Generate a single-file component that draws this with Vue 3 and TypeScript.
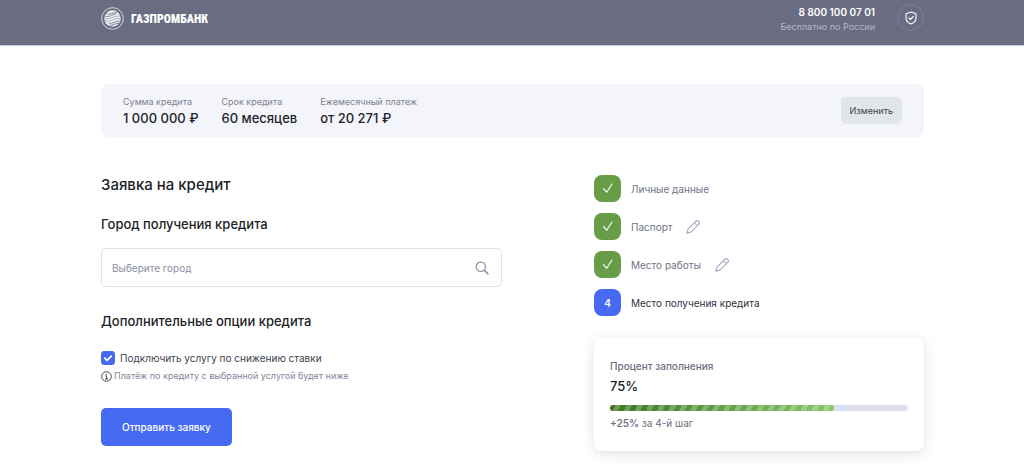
<script setup lang="ts">
import { ref } from 'vue'

interface SummaryItem {
  label: string
  value: string
}

interface Step {
  title: string
  done: boolean
  editable: boolean
}

const summary: SummaryItem[] = [
  { label: 'Сумма кредита', value: '1 000 000 ₽' },
  { label: 'Срок кредита', value: '60 месяцев' },
  { label: 'Ежемесячный платеж', value: 'от 20 271 ₽' },
]

const steps: Step[] = [
  { title: 'Личные данные', done: true, editable: false },
  { title: 'Паспорт', done: true, editable: true },
  { title: 'Место работы', done: true, editable: true },
  { title: 'Место получения кредита', done: false, editable: false },
]

const city = ref('')
const reduceRate = ref(true)
const progress = ref(75)
</script>

<template>
  <div class="page">
    <header class="header">
      <a class="brand" href="#">
        <svg class="brand-mark" viewBox="0 0 24 24" fill="none" aria-hidden="true">
          <circle cx="12" cy="12" r="11.300" stroke="#d9dae1" stroke-width="1" />
          <circle cx="12" cy="12" r="8.600" fill="#eeeef2" />
          <g stroke="#6a6d81" stroke-width="0.500">
            <path d="M5.500 7c3 1.800 7-1.500 11-1.200" stroke-width="0.900" />
            <path d="M4 9.500c5 1.800 9-2.500 12-2.300" stroke-width="0.800" />
            <path d="M3.500 12c6 1.800 10-3.400 16.500-2.500" />
            <path d="M3.500 14.500c6 1.800 10.500-3.400 17-2.500" />
            <path d="M8 17c4 .8 7.500-2.700 12.300-2.400" stroke-width="0.800" />
            <path d="M9 19.200c3 .4 6-2.500 10.500-2.300" stroke-width="0.900" />
          </g>
        </svg>
        <span class="brand-name">ГАЗПРОМБАНК</span>
      </a>
      <div class="contacts">
        <div class="phone-block">
          <a class="phone" href="tel:88001000701">8 800 100 07 01</a>
          <span class="phone-note">Бесплатно по России</span>
        </div>
        <button class="shield" type="button" aria-label="Безопасность">
          <svg width="14" height="14" viewBox="0 0 14 14" fill="none" stroke="#fff" stroke-width="1.100" stroke-linejoin="round" stroke-linecap="round">
            <path d="M7 1 12 2.800V7c0 2.800-2 4.900-5 6-3-1.100-5-3.200-5-6V2.800Z" />
            <path d="m4.800 6.900 1.600 1.600 3-3.200" />
          </svg>
        </button>
      </div>
    </header>

    <main class="content">
      <section class="summary">
        <dl class="summary-list">
          <div v-for="item in summary" :key="item.label">
            <dt>{{ item.label }}</dt>
            <dd>{{ item.value }}</dd>
          </div>
        </dl>
        <button class="change" type="button">Изменить</button>
      </section>

      <div class="columns">
        <form class="form" @submit.prevent>
          <h1>Заявка на кредит</h1>
          <h2><label for="city">Город получения кредита</label></h2>
          <div class="field">
            <input id="city" v-model="city" type="text" placeholder="Выберите город" />
            <svg width="14" height="14" viewBox="0 0 14 14" fill="none" stroke="#8b8fa6" stroke-width="1.200" stroke-linecap="round" aria-hidden="true">
              <circle cx="5.800" cy="5.800" r="4.700" />
              <path d="m9.300 9.300 3.700 3.500" stroke-width="1.600" />
            </svg>
          </div>
          <h2 class="options-title">Дополнительные опции кредита</h2>
          <div class="option">
            <span class="tick">
              <input id="rate" v-model="reduceRate" type="checkbox" />
              <svg viewBox="0 0 14 14" fill="none" stroke="#fff" stroke-width="1.800" stroke-linecap="round" stroke-linejoin="round" aria-hidden="true">
                <path d="m3.800 7.200 2.200 2.200 4.300-4.300" />
              </svg>
            </span>
            <label for="rate">Подключить услугу по снижению ставки</label>
          </div>
          <p class="hint">
            <svg width="11" height="11" viewBox="0 0 11 11" fill="none" stroke="#30323e" aria-hidden="true">
              <circle cx="5.500" cy="5.500" r="4.800" stroke-width="0.900" />
              <path d="M4.300 4.800h1.300V8M4 8h3M5.500 2.500v1.200" stroke-width="0.900" />
            </svg>
            <span>Платёж по кредиту с выбранной услугой будет ниже</span>
          </p>
          <button class="submit" type="submit">Отправить заявку</button>
        </form>

        <aside class="side">
          <ol class="steps">
            <li v-for="(step, index) in steps" :key="step.title" :class="{ current: !step.done }">
              <span class="badge">
                <svg v-if="step.done" width="12" height="12" viewBox="0 0 12 12" fill="none" stroke="#fff" stroke-width="1.100" stroke-linecap="round" stroke-linejoin="round">
                  <path d="m1.500 5.700 3.200 3.500L10 1" />
                </svg>
                <template v-else>{{ index + 1 }}</template>
              </span>
              <span>{{ step.title }}</span>
              <button v-if="step.editable" class="edit" type="button" :aria-label="'Изменить: ' + step.title">
                <svg width="14" height="14" viewBox="0 0 14 14" fill="none" stroke="#a9acc4" stroke-width="1.200" stroke-linejoin="round">
                  <path d="M.8 13.200 2 9.200 9.700 1.500c1-1 2.100-1 3-.1.900.9.900 2 0 2.900L4.800 12.100ZM9.300 3.500l1.300 1.300" />
                </svg>
              </button>
            </li>
          </ol>

          <section class="progress-card">
            <p class="progress-label">Процент заполнения</p>
            <p class="progress-value">{{ progress }}%</p>
            <div class="track" role="progressbar" aria-label="Процент заполнения" :aria-valuenow="progress" aria-valuemin="0" aria-valuemax="100">
              <div class="fill" :style="{ width: progress + '%' }"></div>
            </div>
            <p class="progress-note"><b>+25%</b> за 4-й шаг</p>
          </section>
        </aside>
      </div>
    </main>
  </div>
</template>

<style>
body {
  margin: 0;
  background: #fff;
}
</style>

<style scoped>
.page {
  font-family: Inter, Roboto, sans-serif;
  font-size: 10px;
  line-height: 14px;
  color: #1d1f29;
}
.page *,
.page *::before {
  box-sizing: border-box;
}
h1,
h2,
p,
dl,
dd,
ol {
  margin: 0;
  padding: 0;
}
button,
input {
  font: inherit;
}
button {
  border: 0;
  cursor: pointer;
}
.header {
  display: flex;
  align-items: flex-start;
  justify-content: space-between;
  height: 45px;
  padding: 4px 100px 0 101px;
  background: #6a6d81;
  box-shadow: 0 1px 1px #d0d1d9;
}
.brand {
  display: flex;
  align-items: center;
  gap: 7px;
  padding-top: 3px;
  color: #fff;
  text-decoration: none;
}
.brand-mark {
  width: 23px;
  height: 23px;
}
.brand-name {
  font-family: "Liberation Sans Narrow", "Roboto Condensed", Roboto, sans-serif;
  font-size: 12px;
  font-weight: 900;
}
.contacts {
  display: flex;
  gap: 22px;
}
.phone-block {
  display: flex;
  flex-direction: column;
  align-items: flex-end;
}
.phone {
  line-height: 16px;
  font-weight: 600;
  color: #fff;
  text-decoration: none;
}
.phone-note {
  font-size: 9px;
  color: #b6b8c5;
}
.shield {
  display: grid;
  place-items: center;
  width: 27px;
  height: 27px;
  padding: 0;
  border: 1px solid #7c7f91;
  border-radius: 50%;
  background: none;
}
.content {
  padding: 39px 100px 20px 101px;
}
.summary {
  display: flex;
  align-items: center;
  justify-content: space-between;
  padding: 10px 22px;
  border-radius: 8px;
  background: #f4f5fa;
}
.summary-list {
  display: flex;
  gap: 23px;
}
.summary dt {
  font-size: 9px;
  line-height: 16px;
  color: #7d8091;
}
.summary dd {
  font-size: 13px;
  line-height: 17px;
  font-weight: 500;
}
.change {
  height: 27px;
  padding: 0 9px;
  border-radius: 5px;
  background: #e2e5ea;
  font-size: 9px;
  color: #3f414d;
}
.columns {
  display: grid;
  grid-template-columns: 401fr 330fr;
  gap: 92px;
  padding-top: 38px;
}
h1 {
  font-size: 15px;
  line-height: 20px;
  font-weight: 500;
}
h2 {
  padding-top: 20px;
  font-size: 13px;
  line-height: 18px;
  font-weight: 500;
}
.field {
  display: flex;
  align-items: center;
  height: 39px;
  margin-top: 15px;
  padding: 0 12px 0 10px;
  border: 1px solid #dfe0ea;
  border-radius: 5px;
}
.field input {
  flex: 1;
  min-width: 0;
  padding: 0;
  border: 0;
  outline: 0;
  background: none;
  color: inherit;
}
.field input::placeholder {
  color: #8b8ea5;
  opacity: 1;
}
.options-title {
  padding-top: 25px;
}
.option {
  display: flex;
  align-items: center;
  gap: 5px;
  padding-top: 21px;
  color: #40424e;
}
.tick {
  display: grid;
  width: 14px;
  height: 14px;
}
.tick > * {
  grid-area: 1 / 1;
}
.tick input {
  appearance: none;
  width: 14px;
  height: 14px;
  margin: 0;
  border: 1px solid #466bf2;
  border-radius: 3px;
}
.tick input:checked {
  background: #466bf2;
}
.tick svg {
  pointer-events: none;
}
.tick input:not(:checked) + svg {
  visibility: hidden;
}
.hint {
  display: flex;
  align-items: center;
  gap: 2px;
  padding-top: 4px;
  font-size: 9px;
  color: #828598;
}
.submit {
  height: 38px;
  margin-top: 25px;
  padding: 0 21px;
  border-radius: 5px;
  background: #466bf2;
  font-weight: 500;
  color: #fff;
}
.steps {
  display: grid;
  gap: 11px;
  list-style: none;
}
.steps li {
  display: flex;
  align-items: center;
  gap: 10px;
  color: #707385;
}
.badge {
  display: grid;
  place-items: center;
  width: 27px;
  height: 27px;
  border-radius: 8px;
  background: #689d48;
  color: #fff;
}
.steps .current {
  color: #30323d;
}
.current .badge {
  background: #466bf2;
  font-weight: 600;
}
.edit {
  display: grid;
  padding: 0;
  margin-left: 4px;
  background: none;
}
.progress-card {
  margin-top: 22px;
  padding: 20px 16px;
  border-radius: 8px;
  background: #fff;
  box-shadow: 0 3px 14px #0000001f;
}
.progress-label {
  line-height: 16px;
  color: #6c6f80;
  font-weight: 500;
}
.progress-value {
  padding-top: 2px;
  font-size: 13px;
  line-height: 20px;
  font-weight: 500;
}
.track {
  height: 6px;
  margin: 9px 0 4px;
  border-radius: 3px;
  background: #dbdeed;
}
.fill {
  height: 100%;
  border-radius: 3px;
  background:
    repeating-linear-gradient(115deg, #ffffff00 0 5px, #ffffff40 5px 10px),
    linear-gradient(90deg, #3b761e, #8dc56a);
}
.progress-note {
  line-height: 16px;
  color: #6c6f80;
}
.progress-note b {
  font-weight: 600;
}
</style>
